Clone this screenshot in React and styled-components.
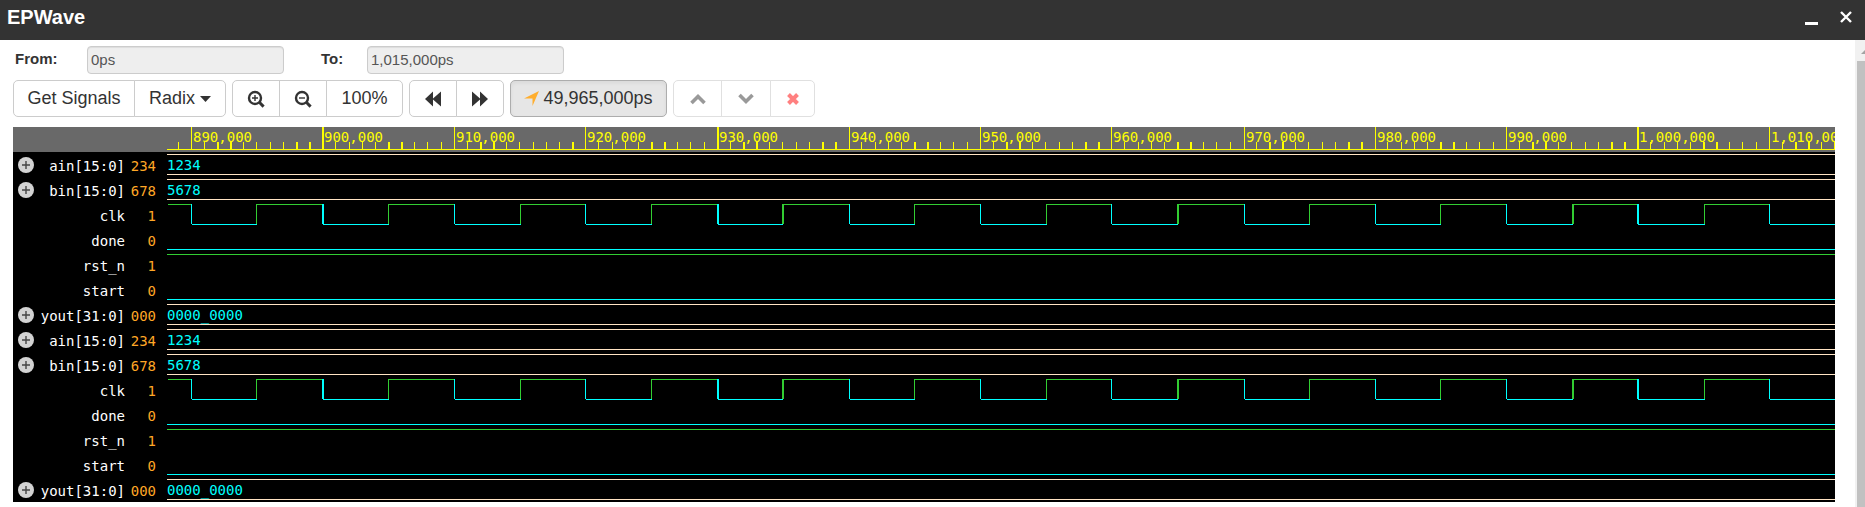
import React from "react";
import styled, { createGlobalStyle, css } from "styled-components";

const Global = createGlobalStyle`
  * { box-sizing: border-box; }
  body { margin: 0; background: #fff; color: #333; font-family: "Liberation Sans", Arial, sans-serif; }
`;

const Window = styled.div`
  display: flex;
  flex-direction: column;
  height: 100vh;
`;

const TitleBar = styled.header`
  flex: none;
  display: flex;
  justify-content: space-between;
  height: 40px;
  padding: 6px 7px 0;
  background: #333;
`;

const Title = styled.h1`
  margin: 0;
  color: #fff;
  font-size: 20px;
  line-height: 22px;
`;

const WindowControls = styled.div`
  display: flex;
  gap: 14px;
`;

const WindowButton = styled.button`
  display: flex;
  width: 20px;
  height: 22px;
  padding: 0;
  border: 0;
  background: none;
`;

const Content = styled.div`
  flex: 1;
  display: flex;
  min-height: 0;
`;

const Main = styled.main`
  flex: 1;
  min-width: 0;
  padding: 6px 20px 0 13px;
`;

const RangeForm = styled.form`
  display: flex;
  align-items: flex-start;
  gap: 37px;
  height: 34px;
  padding-left: 2px;
`;

const Field = styled.div`
  display: flex;
`;

const Label = styled.label`
  width: ${(p) => p.$width}px;
  font-size: 15px;
  line-height: 26px;
  font-weight: bold;
`;

const RangeInput = styled.input`
  width: 197px;
  height: 28px;
  padding: 0 3px 2px;
  border: 1px solid #ccc;
  border-radius: 4px;
  background: #eee;
  box-shadow: inset 0 1px 1px rgba(0, 0, 0, 0.075);
  color: #555;
  font: 15px "Liberation Sans", Arial, sans-serif;
`;

const Toolbar = styled.div`
  display: flex;
  gap: 6px;
  margin-bottom: 10px;
`;

const ButtonGroup = styled.div`
  display: flex;
`;

const ToolButton = styled.button`
  display: flex;
  align-items: center;
  justify-content: center;
  gap: ${(p) => p.$gap || 0}px;
  width: ${(p) => p.$width}px;
  height: 37px;
  padding: 0;
  border: 1px solid #ccc;
  background: #fff;
  color: #333;
  font: 18px "Liberation Sans", Arial, sans-serif;
  white-space: nowrap;

  &:first-child { border-top-left-radius: 5px; border-bottom-left-radius: 5px; }
  &:last-child { border-top-right-radius: 5px; border-bottom-right-radius: 5px; }
  & + & { margin-left: -1px; }
  &:disabled { border-color: #e0e0e0; }

  ${(p) => p.$active && css`
    border-color: #adadad;
    background: #e6e6e6;
    box-shadow: inset 0 2px 4px rgba(0, 0, 0, 0.06);
  `}
`;

const Viewer = styled.section`
  display: grid;
  grid-template-columns: 154px minmax(0, 1fr);
  background: #000;
  font-family: "DejaVu Sans Mono", monospace;
  font-size: 14px;
`;

const RulerBlank = styled.div`
  height: 25px;
  background: #696969;
`;

const Drawing = styled.svg`
  display: block;
  width: 100%;
  height: 25px;
  overflow: hidden;
  background: ${(p) => (p.$ruler ? "#696969" : "#000")};
  font: 14px "DejaVu Sans Mono", monospace;
  shape-rendering: crispEdges;
`;

const SignalLabel = styled.div`
  display: flex;
  align-items: flex-start;
  height: 25px;
  padding: 5px 11px 0 5px;
  color: #fff;
  line-height: 19px;
  white-space: nowrap;
`;

const ExpandButton = styled.button`
  display: flex;
  width: 16px;
  height: 16px;
  padding: 0;
  border: 0;
  background: none;
`;

const SignalName = styled.span`
  flex: 1;
  text-align: right;
`;

const SignalValue = styled.span`
  width: 31px;
  color: #ffa726;
  text-align: right;
`;

const ScrollTrack = styled.div`
  flex: none;
  display: flex;
  flex-direction: column;
  width: 10px;
  padding-left: 2px;
  background: #f1f1f1;
`;

const ScrollThumb = styled.div`
  flex: 1;
  background: #c1c1c1;
`;

// Clock edges every 5,000ps from 890,000ps: [x, thickness]. Even ones fall.
const EDGES = [
  [24, 1], [89, 1], [155, 2], [221, 1], [287, 1], [353, 1], [418, 1], [484, 1],
  [550, 2], [615, 2], [682, 1], [747, 1], [813, 1], [879, 1], [944, 1], [1010, 2],
  [1077, 1], [1142, 1], [1208, 1], [1273, 1], [1339, 1], [1405, 2], [1470, 2],
  [1537, 1], [1602, 1],
];
const WAVE_END = 1668;

const MAJORS = EDGES.filter((_, i) => i % 2 === 0).map(([x, width], i) => ({
  x,
  width,
  text: (890000 + i * 10000).toLocaleString("en-US"),
}));

// Minor ticks every 1,000ps, doubled where they straddle two pixels.
const TICKS = Array.from({ length: 127 }, (_, i) => i - 1)
  .filter((i) => i % 10 !== 0)
  .map((i) => {
    const x = 24.2 + i * 13.15;
    const left = Math.floor(x);
    const rest = x - left;
    return { x: left, width: rest >= 0.4 && rest <= 0.7 ? 2 : 1 };
  });

const SIGNALS = [
  { name: "ain[15:0]", value: "234", bus: "1234" },
  { name: "bin[15:0]", value: "678", bus: "5678" },
  { name: "clk", value: "1", clock: true },
  { name: "done", value: "0", level: 0 },
  { name: "rst_n", value: "1", level: 1 },
  { name: "start", value: "0", level: 0 },
  { name: "yout[31:0]", value: "000", bus: "0000_0000" },
];

const CYAN = "#00ffff";
const GREEN = "#32cd32";

function Ruler() {
  return (
    <Drawing $ruler role="img" aria-label="Time ruler">
      <g fill="#ffff00">
        {TICKS.map((t) => <rect key={t.x} x={t.x} y="15" width={t.width} height="7" />)}
        {MAJORS.map((m) => (
          <g key={m.text}>
            <rect x={m.x} y="0" width={m.width} height="22" />
            <text x={m.x + 2} y="15">{m.text}</text>
          </g>
        ))}
        <rect x="0" y="22" width="100%" height="1" />
      </g>
    </Drawing>
  );
}

function Clock() {
  return (
    <>
      <rect x="1" y="2" width="24" height="1" fill={GREEN} />
      {EDGES.map(([x, width], i) => {
        const falling = i % 2 === 0;
        const end = i + 1 < EDGES.length ? EDGES[i + 1][0] + 1 : WAVE_END;
        return (
          <g key={x} fill={falling ? CYAN : GREEN}>
            <rect x={x} y="2" width={width} height="20" />
            <rect x={x + 1} y={falling ? 22 : 2} width={end - x - 1} height="1" />
          </g>
        );
      })}
    </>
  );
}

function Wave({ signal }) {
  return (
    <Drawing role="img" aria-label={`${signal.name} waveform`}>
      {signal.clock && <Clock />}
      {signal.level !== undefined && (
        <rect x="0" y={signal.level ? 2 : 22} width="100%" height="1" fill={signal.level ? GREEN : CYAN} />
      )}
      {signal.bus && (
        <>
          <rect x="0" y="2" width="100%" height="1" fill="#ffe4c4" />
          <rect x="0" y="22" width="100%" height="1" fill="#ffe4c4" />
          <text x="0" y="18" fill={CYAN}>{signal.bus}</text>
        </>
      )}
    </Drawing>
  );
}

function Signal({ signal }) {
  return (
    <>
      <SignalLabel>
        {signal.bus && (
          <ExpandButton aria-label={`Expand ${signal.name}`}>
            <svg width="16" height="16" viewBox="0 0 16 16">
              <circle cx="8" cy="8" r="8" fill="#d3d3d3" />
              <path d="M8 4v8M4 8h8" stroke="#444" strokeWidth="1.4" />
            </svg>
          </ExpandButton>
        )}
        <SignalName>{signal.name}</SignalName>
        <SignalValue>{signal.value}</SignalValue>
      </SignalLabel>
      <Wave signal={signal} />
    </>
  );
}

function Magnifier({ plus }) {
  return (
    <svg width="18" height="18" viewBox="0 0 18 18" fill="none" stroke="#333">
      <circle cx="8" cy="8" r="6" strokeWidth="2.4" />
      <path d="M12.3 12.3l4.3 4.3" strokeWidth="3" />
      <path d={plus ? "M8 5v6M5 8h6" : "M5 8h6"} strokeWidth="1.4" />
    </svg>
  );
}

function Fast({ forward }) {
  return (
    <svg width="16" height="16" viewBox="0 0 16 16" fill="#333">
      <path d={forward ? "M0 0.5l8 7v-7l8 7.5-8 7.5v-7l-8 7z" : "M16 0.5l-8 7v-7L0 8l8 7.5v-7l8 7z"} />
    </svg>
  );
}

export default function App() {
  return (
    <Window>
      <Global />
      <TitleBar>
        <Title>EPWave</Title>
        <WindowControls>
          <WindowButton aria-label="Minimize">
            <svg width="20" height="22"><rect x="1" y="16" width="13" height="3" fill="#fff" /></svg>
          </WindowButton>
          <WindowButton aria-label="Close">
            <svg width="20" height="22"><path d="M3 6l10 10M13 6L3 16" stroke="#fff" strokeWidth="2.4" /></svg>
          </WindowButton>
        </WindowControls>
      </TitleBar>
      <Content>
        <Main>
          <RangeForm>
            <Field>
              <Label htmlFor="from" $width={72}>From:</Label>
              <RangeInput id="from" readOnly defaultValue="0ps" />
            </Field>
            <Field>
              <Label htmlFor="to" $width={46}>To:</Label>
              <RangeInput id="to" readOnly defaultValue="1,015,000ps" />
            </Field>
          </RangeForm>
          <Toolbar>
            <ButtonGroup>
              <ToolButton $width={122}>Get Signals</ToolButton>
              <ToolButton $width={92} $gap={5}>
                Radix
                <svg width="11" height="6"><path d="M0 0h11L5.5 6z" fill="#333" /></svg>
              </ToolButton>
            </ButtonGroup>
            <ButtonGroup>
              <ToolButton $width={48} aria-label="Zoom in"><Magnifier plus /></ToolButton>
              <ToolButton $width={48} aria-label="Zoom out"><Magnifier /></ToolButton>
              <ToolButton $width={77}>100%</ToolButton>
            </ButtonGroup>
            <ButtonGroup>
              <ToolButton $width={48} aria-label="Rewind"><Fast /></ToolButton>
              <ToolButton $width={48} aria-label="Forward"><Fast forward /></ToolButton>
            </ButtonGroup>
            <ButtonGroup>
              <ToolButton $width={157} $gap={4} $active>
                <svg width="15" height="15" viewBox="0 0 15 15"><path d="M15 0L8.5 15V7.5H0z" fill="#ffae2e" /></svg>
                49,965,000ps
              </ToolButton>
            </ButtonGroup>
            <ButtonGroup>
              <ToolButton $width={49} disabled aria-label="Previous edge">
                <svg width="16" height="12" viewBox="0 0 16 12"><path d="M1.5 10L8 3.5 14.5 10" fill="none" stroke="#999" strokeWidth="3.6" /></svg>
              </ToolButton>
              <ToolButton $width={50} disabled aria-label="Next edge">
                <svg width="16" height="12" viewBox="0 0 16 12"><path d="M1.5 2L8 8.5 14.5 2" fill="none" stroke="#999" strokeWidth="3.6" /></svg>
              </ToolButton>
              <ToolButton $width={45} disabled aria-label="Remove cursor">
                <svg width="12" height="12" viewBox="0 0 12 12"><path d="M1.5 1.5l9 9M10.5 1.5l-9 9" stroke="#ff8080" strokeWidth="4" /></svg>
              </ToolButton>
            </ButtonGroup>
          </Toolbar>
          <Viewer>
            <RulerBlank />
            <Ruler />
            {[...SIGNALS, ...SIGNALS].map((signal, i) => <Signal key={i} signal={signal} />)}
          </Viewer>
        </Main>
        <ScrollTrack>
          <svg width="8" height="21"><path d="M4 14l5-5v5z" fill="#a3a3a3" /></svg>
          <ScrollThumb />
        </ScrollTrack>
      </Content>
    </Window>
  );
}
